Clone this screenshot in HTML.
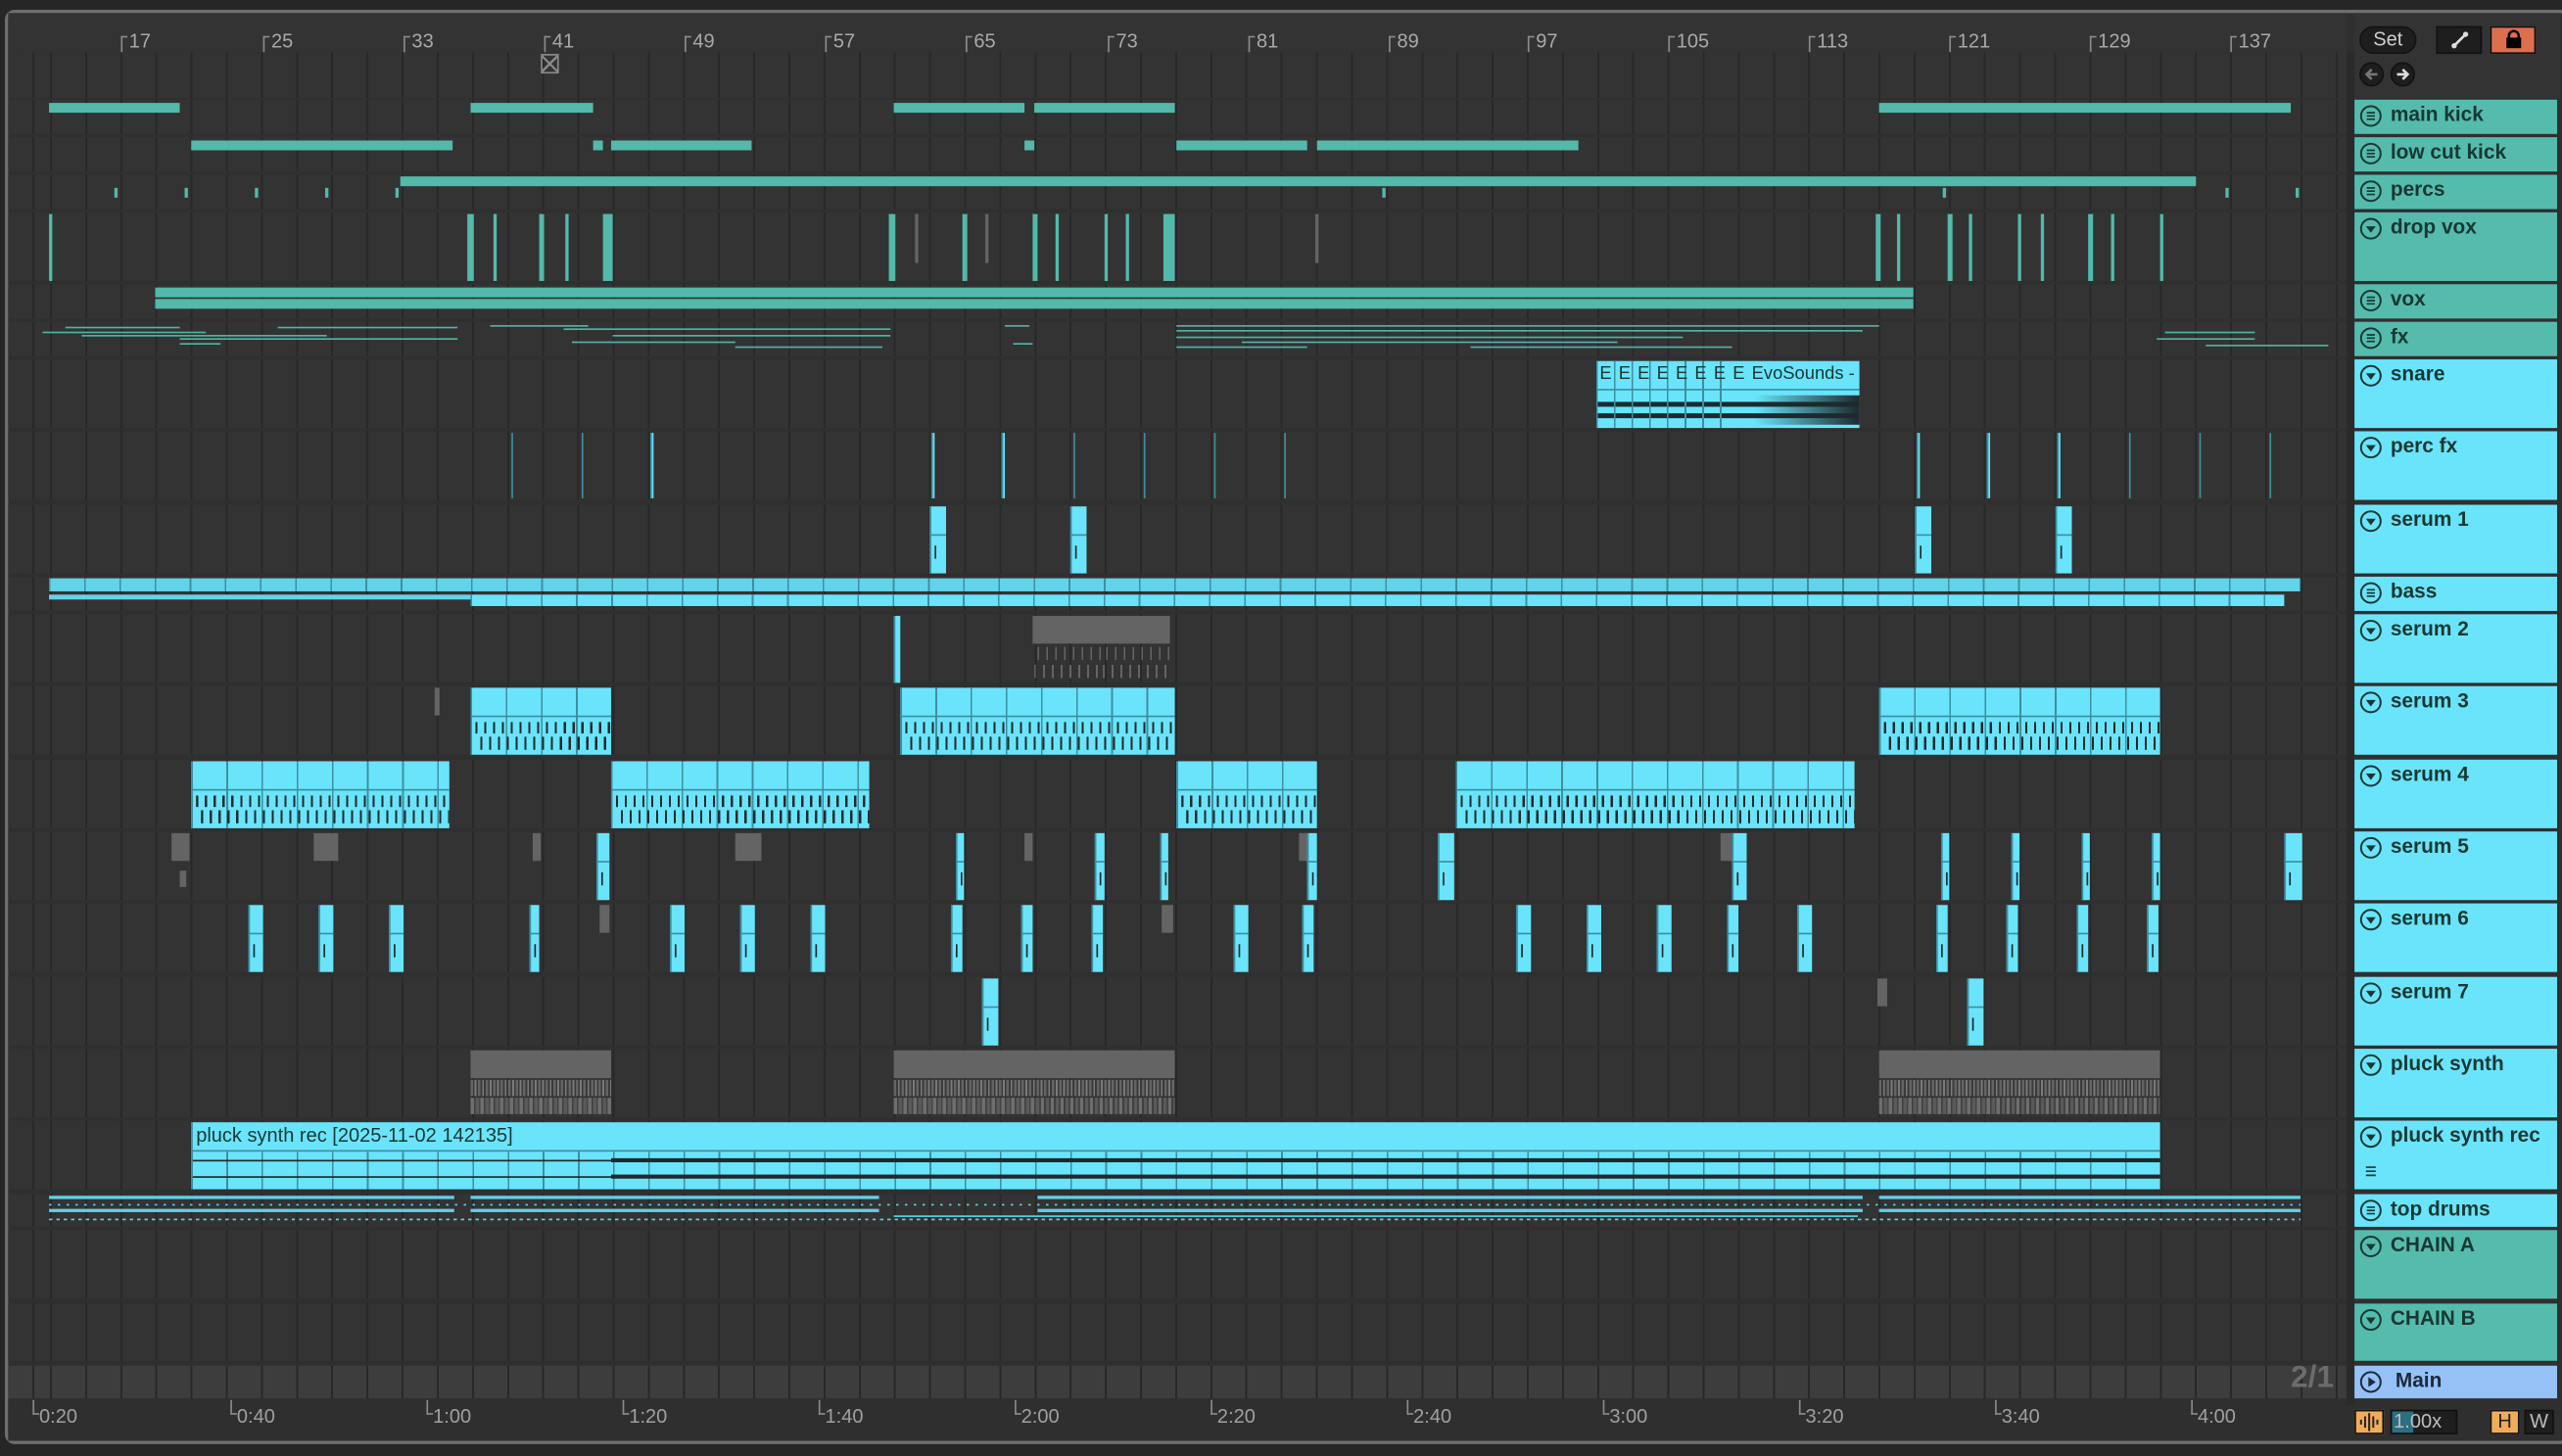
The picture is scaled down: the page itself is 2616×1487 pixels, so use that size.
<!DOCTYPE html>
<html><head><meta charset="utf-8"><style>
*{margin:0;padding:0;box-sizing:border-box}
html,body{width:2616px;height:1486px;overflow:hidden;background:#262626}
#s{position:absolute;left:0;top:0;width:1568px;height:891px;transform:scale(1.66837);transform-origin:0 0;font-family:"Liberation Sans",sans-serif}
.a{position:absolute}
.win{left:3px;top:6px;width:1570px;height:878px;border:2px solid #6e6e6e;border-radius:6px;background:#2f2f2f}
.row{position:absolute;left:5px;width:1431px;background:#333 repeating-linear-gradient(90deg,#282828 0,#282828 1.2px,transparent 1.2px,transparent 21.52px) 25.6px 0}
.h{position:absolute;left:1441px;width:123.5px;font-weight:bold;font-size:12.5px;color:#173833;padding-left:22px;line-height:18px}
.h svg{position:absolute;left:3px;top:3px}
.t{position:absolute;background:#53b9aa}
.c{position:absolute;background:#6ae4fb;box-shadow:inset 1px 0 0 #3d8fa0}
.g{position:absolute;background:#646464}
.ln{position:absolute;height:1px;background:#5fd0e6}
.lt{position:absolute;height:1px;background:#4fb3a5}
.cc{position:absolute;background:
 linear-gradient(#3d8fa0,#3d8fa0) 0 17px/100% 1px no-repeat,
 repeating-linear-gradient(90deg,#1d2a2d 0 1.3px,transparent 1.3px 5.4px) 3px 21px/100% 7px no-repeat,
 repeating-linear-gradient(90deg,#1d2a2d 0 1.3px,transparent 1.3px 5.4px) 5.5px 30px/100% 8px no-repeat,
 repeating-linear-gradient(90deg,#3d8fa0 0 1px,transparent 1px 21.52px) 0 0,
 #6ae4fb}
.sc{position:absolute;background:
 linear-gradient(#3d8fa0,#3d8fa0) 0 17px/100% 1px no-repeat,
 linear-gradient(#1d2a2d,#1d2a2d) 3px 24px/1.3px 8px no-repeat,
 #6ae4fb;box-shadow:inset 1px 0 0 #3d8fa0}
.gg{position:absolute;background:
 linear-gradient(#646464,#646464) 0 0/100% 17px no-repeat,
 repeating-linear-gradient(90deg,#646464 0 1px,transparent 1px 5.4px) 3px 19px/100% 8px no-repeat,
 repeating-linear-gradient(90deg,#646464 0 1px,transparent 1px 5.4px) 1px 30px/100% 8px no-repeat}
.gp{position:absolute;background:
 linear-gradient(#646464,#646464) 0 0/100% 17px no-repeat,
 repeating-linear-gradient(90deg,#646464 0 1.5px,#3a3a3a 1.5px 2.5px,#7a7a7a 2.5px 3.6px,#3a3a3a 3.6px 4.6px) 0 18px/100% 10px no-repeat,
 repeating-linear-gradient(90deg,#6e6e6e 0 2px,#3f3f3f 2px 3px,#5a5a5a 3px 5px,#454545 5px 6px) 0 29px/100% 10px no-repeat}
.rn{position:absolute;top:18px;font-size:12px;color:#a9a9a9}
.rn:before{content:"";position:absolute;left:-5px;top:4px;width:3px;height:9px;border-left:1px solid #8a8a8a;border-top:1px solid #8a8a8a}
.bn{position:absolute;top:860px;font-size:12px;color:#a0a0a0}
.bn:before{content:"";position:absolute;left:-4px;top:-3px;width:3px;height:8px;border-left:1px solid #8a8a8a;border-bottom:1px solid #8a8a8a}
</style></head><body><div id="s">
<div class="a win"></div>
<!-- ruler top -->
<div class="a" style="left:5px;top:8px;width:1431px;height:24px;background:#333"></div>
<div class="rn" style="left:79px">17</div><div class="rn" style="left:166px">25</div><div class="rn" style="left:252px">33</div><div class="rn" style="left:338px">41</div><div class="rn" style="left:424px">49</div><div class="rn" style="left:510px">57</div><div class="rn" style="left:596px">65</div><div class="rn" style="left:683px">73</div><div class="rn" style="left:769px">81</div><div class="rn" style="left:855px">89</div><div class="rn" style="left:940px">97</div><div class="rn" style="left:1026px">105</div><div class="rn" style="left:1112px">113</div><div class="rn" style="left:1198px">121</div><div class="rn" style="left:1284px">129</div><div class="rn" style="left:1370px">137</div>
<div class="row" style="top:32px;height:28px"></div>
<div class="a" style="left:331px;top:33px;width:11px;height:12px;border:1.5px solid #8a8a8a;background:linear-gradient(45deg,transparent 45%,#8a8a8a 45% 55%,transparent 55%),linear-gradient(-45deg,transparent 45%,#8a8a8a 45% 55%,transparent 55%)"></div>
<div class="a" style="left:1436px;top:32px;width:5px;height:828px;background:#2a2a2a"></div>
<div class="a" style="left:1441px;top:8px;width:126px;height:52px;background:#333"></div>
<!-- top buttons -->
<div class="a" style="left:1444px;top:16px;width:35px;height:17px;border-radius:9px;background:#1e1e1e;border:1px solid #111;color:#cfcfcf;font-size:12px;text-align:center;line-height:15px">Set</div>
<div class="a" style="left:1491px;top:16px;width:28px;height:17px;background:#1e1e1e;border:1px solid #111"><svg width="28" height="15"><line x1="10" y1="11" x2="17" y2="4" stroke="#ddd" stroke-width="1.6"/><circle cx="10" cy="11" r="1.6" fill="#ddd"/><circle cx="17" cy="4" r="1.6" fill="#ddd"/></svg></div>
<div class="a" style="left:1524px;top:16px;width:28px;height:17px;background:#dd6f4f;border:1px solid #111"><svg width="28" height="15"><rect x="9" y="6" width="9" height="6.5" fill="#000"/><path d="M10.5 6.5V5a3 3 0 0 1 6 0v1.5" stroke="#000" stroke-width="1.5" fill="none"/></svg></div>
<div class="a" style="left:1444px;top:38px;width:15px;height:15px;border-radius:50%;background:#1e1e1e;border:1px solid #111"><svg width="13" height="13"><path d="M10 6.5H4M6.5 3.5L3.5 6.5L6.5 9.5" stroke="#777" stroke-width="1.6" fill="none"/></svg></div>
<div class="a" style="left:1463px;top:38px;width:15px;height:15px;border-radius:50%;background:#1e1e1e;border:1px solid #111"><svg width="13" height="13"><path d="M3 6.5H9M6.5 3.5L9.5 6.5L6.5 9.5" stroke="#ddd" stroke-width="1.6" fill="none"/></svg></div>

<!-- rows -->
<div class="row" style="top:61px;height:20.5px"></div>
<div class="row" style="top:84px;height:20.5px"></div>
<div class="row" style="top:107px;height:20.5px"></div>
<div class="row" style="top:129.5px;height:42px"></div>
<div class="row" style="top:174px;height:20.5px"></div>
<div class="row" style="top:197px;height:20.5px"></div>
<div class="row" style="top:219.5px;height:42px"></div>
<div class="row" style="top:264px;height:42px"></div>
<div class="row" style="top:308.5px;height:42px"></div>
<div class="row" style="top:353px;height:20.5px"></div>
<div class="row" style="top:375.5px;height:42px"></div>
<div class="row" style="top:420px;height:42px"></div>
<div class="row" style="top:464.5px;height:42px"></div>
<div class="row" style="top:508.5px;height:42px"></div>
<div class="row" style="top:553px;height:42px"></div>
<div class="row" style="top:597.5px;height:42px"></div>
<div class="row" style="top:641.5px;height:42px"></div>
<div class="row" style="top:686px;height:42px"></div>
<div class="row" style="top:730.5px;height:20.5px"></div>
<div class="row" style="top:753px;height:42px"></div>
<div class="row" style="top:797.5px;height:35px"></div>
<div class="row" style="top:835.5px;height:20.5px;background-color:#3d3d3d"></div>
<div class="a" style="left:1402px;top:833px;font-size:19px;font-weight:bold;color:#6c6c6c">2/1</div>
<!-- bottom ruler -->
<div class="a" style="left:5px;top:858px;width:1431px;height:24px;background:#2f2f2f"></div>
<div class="bn" style="left:24px">0:20</div><div class="bn" style="left:145px">0:40</div><div class="bn" style="left:265px">1:00</div><div class="bn" style="left:385px">1:20</div><div class="bn" style="left:505px">1:40</div><div class="bn" style="left:625px">2:00</div><div class="bn" style="left:745px">2:20</div><div class="bn" style="left:865px">2:40</div><div class="bn" style="left:985px">3:00</div><div class="bn" style="left:1105px">3:20</div><div class="bn" style="left:1225px">3:40</div><div class="bn" style="left:1345px">4:00</div>
<!-- bottom buttons -->
<div class="a" style="left:1441px;top:863px;width:18px;height:15px;background:#f1ac5a;border:1px solid #111"><svg width="16" height="13"><path d="M3 5v3M5.5 3v7M8 1v11M10.5 3v7M13 5v3" stroke="#222" stroke-width="1.2"/></svg></div>
<div class="a" style="left:1463px;top:863px;width:41px;height:15px;background:#1e1e1e;border:1px solid #111"></div>
<div class="a" style="left:1464px;top:864px;width:13px;height:13px;background:#2b6f80"></div>
<div class="a" style="left:1465px;top:863px;font-size:12px;color:#bdbdbd;line-height:15px">1.00x</div>
<div class="a" style="left:1524px;top:863px;width:18px;height:15px;background:#f1ac5a;border:1px solid #111;font-size:12px;text-align:center;line-height:13px;color:#222">H</div>
<div class="a" style="left:1545px;top:863px;width:18px;height:15px;background:#1e1e1e;border:1px solid #111;font-size:12px;text-align:center;line-height:13px;color:#bbb">W</div>

<!-- headers -->
<div class="h" style="top:61px;height:20.5px;background:#55bcad"><svg width="14" height="14"><circle cx="7" cy="7" r="6" fill="none" stroke="#173833" stroke-width="1.2"/><path d="M4.5 5h5M4.5 7h5M4.5 9h5" stroke="#173833" stroke-width="1"/></svg>main kick</div>
<div class="h" style="top:84px;height:20.5px;background:#55bcad"><svg width="14" height="14"><circle cx="7" cy="7" r="6" fill="none" stroke="#173833" stroke-width="1.2"/><path d="M4.5 5h5M4.5 7h5M4.5 9h5" stroke="#173833" stroke-width="1"/></svg>low cut kick</div>
<div class="h" style="top:107px;height:20.5px;background:#55bcad"><svg width="14" height="14"><circle cx="7" cy="7" r="6" fill="none" stroke="#173833" stroke-width="1.2"/><path d="M4.5 5h5M4.5 7h5M4.5 9h5" stroke="#173833" stroke-width="1"/></svg>percs</div>
<div class="h" style="top:129.5px;height:42px;background:#55bcad"><svg width="14" height="14"><circle cx="7" cy="7" r="6" fill="none" stroke="#173833" stroke-width="1.2"/><path d="M4 5.5h6L7 9.5z" fill="#173833"/></svg>drop vox</div>
<div class="h" style="top:174px;height:20.5px;background:#55bcad"><svg width="14" height="14"><circle cx="7" cy="7" r="6" fill="none" stroke="#173833" stroke-width="1.2"/><path d="M4.5 5h5M4.5 7h5M4.5 9h5" stroke="#173833" stroke-width="1"/></svg>vox</div>
<div class="h" style="top:197px;height:20.5px;background:#55bcad"><svg width="14" height="14"><circle cx="7" cy="7" r="6" fill="none" stroke="#173833" stroke-width="1.2"/><path d="M4.5 5h5M4.5 7h5M4.5 9h5" stroke="#173833" stroke-width="1"/></svg>fx</div>
<div class="h" style="top:219.5px;height:42px;background:#6ae4fb"><svg width="14" height="14"><circle cx="7" cy="7" r="6" fill="none" stroke="#173833" stroke-width="1.2"/><path d="M4 5.5h6L7 9.5z" fill="#173833"/></svg>snare</div>
<div class="h" style="top:264px;height:42px;background:#6ae4fb"><svg width="14" height="14"><circle cx="7" cy="7" r="6" fill="none" stroke="#173833" stroke-width="1.2"/><path d="M4 5.5h6L7 9.5z" fill="#173833"/></svg>perc fx</div>
<div class="h" style="top:308.5px;height:42px;background:#6ae4fb"><svg width="14" height="14"><circle cx="7" cy="7" r="6" fill="none" stroke="#173833" stroke-width="1.2"/><path d="M4 5.5h6L7 9.5z" fill="#173833"/></svg>serum 1</div>
<div class="h" style="top:353px;height:20.5px;background:#6ae4fb"><svg width="14" height="14"><circle cx="7" cy="7" r="6" fill="none" stroke="#173833" stroke-width="1.2"/><path d="M4.5 5h5M4.5 7h5M4.5 9h5" stroke="#173833" stroke-width="1"/></svg>bass</div>
<div class="h" style="top:375.5px;height:42px;background:#6ae4fb"><svg width="14" height="14"><circle cx="7" cy="7" r="6" fill="none" stroke="#173833" stroke-width="1.2"/><path d="M4 5.5h6L7 9.5z" fill="#173833"/></svg>serum 2</div>
<div class="h" style="top:420px;height:42px;background:#6ae4fb"><svg width="14" height="14"><circle cx="7" cy="7" r="6" fill="none" stroke="#173833" stroke-width="1.2"/><path d="M4 5.5h6L7 9.5z" fill="#173833"/></svg>serum 3</div>
<div class="h" style="top:464.5px;height:42px;background:#6ae4fb"><svg width="14" height="14"><circle cx="7" cy="7" r="6" fill="none" stroke="#173833" stroke-width="1.2"/><path d="M4 5.5h6L7 9.5z" fill="#173833"/></svg>serum 4</div>
<div class="h" style="top:508.5px;height:42px;background:#6ae4fb"><svg width="14" height="14"><circle cx="7" cy="7" r="6" fill="none" stroke="#173833" stroke-width="1.2"/><path d="M4 5.5h6L7 9.5z" fill="#173833"/></svg>serum 5</div>
<div class="h" style="top:553px;height:42px;background:#6ae4fb"><svg width="14" height="14"><circle cx="7" cy="7" r="6" fill="none" stroke="#173833" stroke-width="1.2"/><path d="M4 5.5h6L7 9.5z" fill="#173833"/></svg>serum 6</div>
<div class="h" style="top:597.5px;height:42px;background:#6ae4fb"><svg width="14" height="14"><circle cx="7" cy="7" r="6" fill="none" stroke="#173833" stroke-width="1.2"/><path d="M4 5.5h6L7 9.5z" fill="#173833"/></svg>serum 7</div>
<div class="h" style="top:641.5px;height:42px;background:#6ae4fb"><svg width="14" height="14"><circle cx="7" cy="7" r="6" fill="none" stroke="#173833" stroke-width="1.2"/><path d="M4 5.5h6L7 9.5z" fill="#173833"/></svg>pluck synth</div>
<div class="h" style="top:686px;height:42px;background:#6ae4fb"><svg width="14" height="14"><circle cx="7" cy="7" r="6" fill="none" stroke="#173833" stroke-width="1.2"/><path d="M4 5.5h6L7 9.5z" fill="#173833"/></svg>pluck synth rec<svg width="10" height="10" style="left:6px;top:26px"><path d="M1 2.5h6M1 5h6M1 7.5h6" stroke="#173833" stroke-width="1"/></svg></div>
<div class="h" style="top:730.5px;height:20.5px;background:#6ae4fb"><svg width="14" height="14"><circle cx="7" cy="7" r="6" fill="none" stroke="#173833" stroke-width="1.2"/><path d="M4.5 5h5M4.5 7h5M4.5 9h5" stroke="#173833" stroke-width="1"/></svg>top drums</div>
<div class="h" style="top:753px;height:42px;background:#55bcad"><svg width="14" height="14"><circle cx="7" cy="7" r="6" fill="none" stroke="#173833" stroke-width="1.2"/><path d="M4 5.5h6L7 9.5z" fill="#173833"/></svg>CHAIN A</div>
<div class="h" style="top:797.5px;height:35px;background:#55bcad"><svg width="14" height="14"><circle cx="7" cy="7" r="6" fill="none" stroke="#173833" stroke-width="1.2"/><path d="M4 5.5h6L7 9.5z" fill="#173833"/></svg>CHAIN B</div>
<div class="h" style="top:835.5px;height:20.5px;background:#95c1f6;color:#1c2a3a;padding-left:25px"><svg width="14" height="14"><circle cx="7" cy="7" r="6" fill="none" stroke="#1c2a3a" stroke-width="1.2"/><path d="M5.5 4v6l4.5-3z" fill="#1c2a3a"/></svg>Main</div>

<!-- main kick -->
<div class="t" style="left:30px;top:62.5px;width:80px;height:6px"></div>
<div class="t" style="left:288px;top:62.5px;width:75px;height:6px"></div>
<div class="t" style="left:547px;top:62.5px;width:80px;height:6px"></div>
<div class="t" style="left:633px;top:62.5px;width:86px;height:6px"></div>
<div class="t" style="left:1150px;top:62.5px;width:252px;height:6px"></div>
<!-- low cut -->
<div class="t" style="left:117px;top:85.5px;width:160px;height:6px"></div>
<div class="t" style="left:363px;top:85.5px;width:6px;height:6px"></div>
<div class="t" style="left:374px;top:85.5px;width:86px;height:6px"></div>
<div class="t" style="left:627px;top:85.5px;width:6px;height:6px"></div>
<div class="t" style="left:720px;top:85.5px;width:80px;height:6px"></div>
<div class="t" style="left:806px;top:85.5px;width:160px;height:6px"></div>
<!-- percs -->
<div class="t" style="left:245px;top:108px;width:1099px;height:6px"></div>
<div class="t" style="left:70px;top:115px;width:1.5px;height:6px"></div><div class="t" style="left:113px;top:115px;width:1.5px;height:6px"></div><div class="t" style="left:156px;top:115px;width:1.5px;height:6px"></div><div class="t" style="left:199px;top:115px;width:1.5px;height:6px"></div><div class="t" style="left:242px;top:115px;width:1.5px;height:6px"></div><div class="t" style="left:846px;top:115px;width:1.5px;height:6px"></div><div class="t" style="left:1189px;top:115px;width:1.5px;height:6px"></div><div class="t" style="left:1362px;top:115px;width:1.5px;height:6px"></div><div class="t" style="left:1405px;top:115px;width:1.5px;height:6px"></div>
<!-- drop vox -->
<div class="t" style="left:30px;top:130.5px;width:2px;height:41px"></div>
<div class="t" style="left:286px;top:130.5px;width:4px;height:41px"></div><div class="t" style="left:302px;top:130.5px;width:2px;height:41px"></div><div class="t" style="left:330px;top:130.5px;width:3px;height:41px"></div><div class="t" style="left:346px;top:130.5px;width:2px;height:41px"></div><div class="t" style="left:369px;top:130.5px;width:6px;height:41px"></div>
<div class="t" style="left:544px;top:130.5px;width:4px;height:41px"></div><div class="g" style="left:560px;top:130.5px;width:2px;height:30px"></div><div class="t" style="left:589px;top:130.5px;width:3px;height:41px"></div><div class="g" style="left:603px;top:130.5px;width:2px;height:30px"></div><div class="t" style="left:632px;top:130.5px;width:3px;height:41px"></div><div class="t" style="left:646px;top:130.5px;width:2px;height:41px"></div><div class="t" style="left:676px;top:130.5px;width:2px;height:41px"></div><div class="t" style="left:689px;top:130.5px;width:2px;height:41px"></div><div class="t" style="left:712px;top:130.5px;width:7px;height:41px"></div><div class="g" style="left:805px;top:130.5px;width:2px;height:30px"></div>
<div class="t" style="left:1148px;top:130.5px;width:3px;height:41px"></div><div class="t" style="left:1161px;top:130.5px;width:2px;height:41px"></div><div class="t" style="left:1192px;top:130.5px;width:3px;height:41px"></div><div class="t" style="left:1205px;top:130.5px;width:2px;height:41px"></div><div class="t" style="left:1235px;top:130.5px;width:2px;height:41px"></div><div class="t" style="left:1249px;top:130.5px;width:2px;height:41px"></div><div class="t" style="left:1278px;top:130.5px;width:3px;height:41px"></div><div class="t" style="left:1292px;top:130.5px;width:2px;height:41px"></div><div class="t" style="left:1322px;top:130.5px;width:2px;height:41px"></div>
<!-- vox -->
<div class="t" style="left:95px;top:175.5px;width:1076px;height:6px"></div>
<div class="t" style="left:95px;top:182.5px;width:1076px;height:6px"></div>
<!-- fx lines -->
<div class="lt" style="left:40px;top:200px;width:70px"></div><div class="lt" style="left:26px;top:203px;width:100px"></div><div class="lt" style="left:50px;top:205px;width:150px"></div><div class="lt" style="left:110px;top:207px;width:170px"></div><div class="lt" style="left:110px;top:210px;width:25px"></div><div class="lt" style="left:170px;top:200px;width:110px"></div>
<div class="lt" style="left:300px;top:199px;width:60px"></div><div class="lt" style="left:345px;top:201px;width:200px"></div><div class="lt" style="left:375px;top:205px;width:170px"></div><div class="lt" style="left:350px;top:209px;width:100px"></div><div class="lt" style="left:450px;top:212px;width:90px"></div><div class="lt" style="left:615px;top:199px;width:15px"></div><div class="lt" style="left:620px;top:210px;width:12px"></div>
<div class="lt" style="left:720px;top:199px;width:430px"></div><div class="lt" style="left:720px;top:202px;width:420px"></div><div class="lt" style="left:720px;top:206px;width:310px"></div><div class="lt" style="left:760px;top:209px;width:230px"></div><div class="lt" style="left:720px;top:212px;width:80px"></div><div class="lt" style="left:900px;top:212px;width:160px"></div>
<div class="lt" style="left:1325px;top:203px;width:55px"></div><div class="lt" style="left:1320px;top:207px;width:60px"></div><div class="lt" style="left:1350px;top:211px;width:75px"></div>
<!-- snare -->
<div class="a" style="left:977px;top:220.5px;width:161px;height:41px;background:
 repeating-linear-gradient(90deg,#3d8fa0 0 1px,transparent 1px 10.8px) 0 0/85px 100% no-repeat,
 linear-gradient(#3d8fa0,#3d8fa0) 0 17px/100% 1px no-repeat,
 linear-gradient(#1d2a2d,#1d2a2d) 0 25px/100% 3px no-repeat,
 linear-gradient(#1d2a2d,#1d2a2d) 0 32px/100% 3px no-repeat,
 linear-gradient(90deg,transparent 60%,#1d2a2d) 0 21px/100% 18px no-repeat,
 #6ae4fb;font-size:11px;color:#173833;line-height:17px;white-space:nowrap;overflow:hidden"><span style="letter-spacing:4.3px;padding-left:2px">EEEEEEEE</span>EvoSounds -</div>
<!-- perc fx -->
<div class="a" style="left:313px;top:265px;width:1px;height:40px;background:#3d8fa0"></div><div class="a" style="left:356px;top:265px;width:1px;height:40px;background:#3d8fa0"></div><div class="c" style="left:398px;top:265px;width:2px;height:40px"></div><div class="c" style="left:570px;top:265px;width:2px;height:40px"></div><div class="c" style="left:613px;top:265px;width:2px;height:40px"></div><div class="a" style="left:657px;top:265px;width:1px;height:40px;background:#3d8fa0"></div><div class="a" style="left:700px;top:265px;width:1px;height:40px;background:#3d8fa0"></div><div class="a" style="left:743px;top:265px;width:1px;height:40px;background:#3d8fa0"></div><div class="a" style="left:786px;top:265px;width:1px;height:40px;background:#3d8fa0"></div><div class="c" style="left:1173px;top:265px;width:2px;height:40px"></div><div class="c" style="left:1216px;top:265px;width:2px;height:40px"></div><div class="c" style="left:1259px;top:265px;width:2px;height:40px"></div><div class="a" style="left:1303px;top:265px;width:1px;height:40px;background:#3d8fa0"></div><div class="a" style="left:1346px;top:265px;width:1px;height:40px;background:#3d8fa0"></div><div class="a" style="left:1389px;top:265px;width:1px;height:40px;background:#3d8fa0"></div>
<!-- serum1 -->
<div class="sc" style="left:569px;top:309.5px;width:10px;height:41px"></div><div class="sc" style="left:655px;top:309.5px;width:10px;height:41px"></div><div class="sc" style="left:1172px;top:309.5px;width:10px;height:41px"></div><div class="sc" style="left:1258px;top:309.5px;width:10px;height:41px"></div>
<!-- bass -->
<div class="a" style="left:30px;top:354px;width:1378px;height:8px;background:repeating-linear-gradient(90deg,#3d8fa0 0 1px,transparent 1px 21.52px) 0 0,#62d4ea"></div>
<div class="a" style="left:30px;top:363.5px;width:258px;height:3px;background:#62d4ea"></div>
<div class="a" style="left:288px;top:363.5px;width:1110px;height:7px;background:repeating-linear-gradient(90deg,#3d8fa0 0 1px,transparent 1px 21.52px) 0 0,#6ae4fb"></div>
<!-- serum2 -->
<div class="c" style="left:547px;top:376.5px;width:4px;height:41px"></div>
<div class="gg" style="left:632px;top:376.5px;width:42px;height:41px"></div><div class="gg" style="left:674px;top:376.5px;width:42px;height:41px"></div>
<!-- serum3 -->
<div class="cc" style="left:288px;top:421px;width:86px;height:41px"></div>
<div class="cc" style="left:551px;top:421px;width:168px;height:41px"></div>
<div class="cc" style="left:1150px;top:421px;width:172px;height:41px"></div>
<div class="g" style="left:266px;top:421px;width:3px;height:17px"></div>
<!-- serum4 -->
<div class="cc" style="left:117px;top:465.5px;width:158px;height:41px"></div>
<div class="cc" style="left:374px;top:465.5px;width:158px;height:41px"></div>
<div class="cc" style="left:720px;top:465.5px;width:86px;height:41px"></div>
<div class="cc" style="left:891px;top:465.5px;width:244px;height:41px"></div>
<!-- serum5 -->
<div class="g" style="left:105px;top:509.5px;width:11px;height:17px"></div><div class="g" style="left:110px;top:533px;width:4px;height:10px"></div>
<div class="g" style="left:192px;top:509.5px;width:15px;height:17px"></div>
<div class="g" style="left:326px;top:509.5px;width:5px;height:17px"></div>
<div class="sc" style="left:365px;top:509.5px;width:8px;height:41px"></div>
<div class="g" style="left:450px;top:509.5px;width:16px;height:17px"></div>
<div class="sc" style="left:585px;top:509.5px;width:5px;height:41px"></div>
<div class="g" style="left:627px;top:509.5px;width:5px;height:17px"></div>
<div class="sc" style="left:670px;top:509.5px;width:6px;height:41px"></div>
<div class="sc" style="left:710px;top:509.5px;width:5px;height:41px"></div>
<div class="g" style="left:795px;top:509.5px;width:5px;height:17px"></div><div class="sc" style="left:800px;top:509.5px;width:6px;height:41px"></div>
<div class="sc" style="left:880px;top:509.5px;width:10px;height:41px"></div>
<div class="g" style="left:1053px;top:509.5px;width:7px;height:17px"></div><div class="sc" style="left:1060px;top:509.5px;width:9px;height:41px"></div>
<div class="sc" style="left:1188px;top:509.5px;width:5px;height:41px"></div><div class="sc" style="left:1231px;top:509.5px;width:5px;height:41px"></div><div class="sc" style="left:1274px;top:509.5px;width:5px;height:41px"></div><div class="sc" style="left:1317px;top:509.5px;width:5px;height:41px"></div><div class="sc" style="left:1398px;top:509.5px;width:11px;height:41px"></div>
<!-- serum6 -->
<div class="sc" style="left:152px;top:554px;width:9px;height:41px"></div><div class="sc" style="left:195px;top:554px;width:9px;height:41px"></div><div class="sc" style="left:238px;top:554px;width:9px;height:41px"></div><div class="sc" style="left:324px;top:554px;width:6px;height:41px"></div><div class="g" style="left:367px;top:554px;width:6px;height:17px"></div><div class="sc" style="left:410px;top:554px;width:9px;height:41px"></div><div class="sc" style="left:453px;top:554px;width:9px;height:41px"></div><div class="sc" style="left:496px;top:554px;width:9px;height:41px"></div><div class="sc" style="left:582px;top:554px;width:7px;height:41px"></div><div class="sc" style="left:625px;top:554px;width:7px;height:41px"></div><div class="sc" style="left:668px;top:554px;width:7px;height:41px"></div><div class="g" style="left:711px;top:554px;width:7px;height:17px"></div><div class="sc" style="left:755px;top:554px;width:9px;height:41px"></div><div class="sc" style="left:797px;top:554px;width:7px;height:41px"></div><div class="sc" style="left:928px;top:554px;width:9px;height:41px"></div><div class="sc" style="left:971px;top:554px;width:9px;height:41px"></div><div class="sc" style="left:1014px;top:554px;width:9px;height:41px"></div><div class="sc" style="left:1057px;top:554px;width:7px;height:41px"></div><div class="sc" style="left:1100px;top:554px;width:9px;height:41px"></div><div class="sc" style="left:1185px;top:554px;width:7px;height:41px"></div><div class="sc" style="left:1228px;top:554px;width:7px;height:41px"></div><div class="sc" style="left:1271px;top:554px;width:7px;height:41px"></div><div class="sc" style="left:1314px;top:554px;width:7px;height:41px"></div>
<!-- serum7 -->
<div class="sc" style="left:601px;top:598.5px;width:10px;height:41px"></div>
<div class="g" style="left:1149px;top:598.5px;width:6px;height:17px"></div>
<div class="sc" style="left:1204px;top:598.5px;width:10px;height:41px"></div>
<!-- pluck synth -->
<div class="gp" style="left:288px;top:642.5px;width:86px;height:41px"></div>
<div class="gp" style="left:547px;top:642.5px;width:172px;height:41px"></div>
<div class="gp" style="left:1150px;top:642.5px;width:172px;height:41px"></div>
<!-- pluck rec -->
<div class="a" style="left:117px;top:687px;width:1205px;height:41px;background:
 linear-gradient(#3d8fa0,#3d8fa0) 0 17px/100% 1px no-repeat,
 linear-gradient(#1d2a2d,#1d2a2d) 0 23px/100% 1px no-repeat,
 linear-gradient(#1d2a2d,#1d2a2d) 0 33px/100% 1px no-repeat,
 linear-gradient(#1d2a2d,#1d2a2d) 257px 22px/100% 2.5px no-repeat,
 linear-gradient(#1d2a2d,#1d2a2d) 257px 32px/100% 2.5px no-repeat,
 repeating-linear-gradient(90deg,#3d8fa0 0 1px,transparent 1px 21.52px) 0 18px/100% 23px no-repeat,
 #6ae4fb;box-shadow:inset 1px 0 0 #3d8fa0;font-size:12px;color:#173833;line-height:17px;padding-left:3px">pluck synth rec [2025-11-02 142135]</div>
<!-- top drums -->
<div class="ln" style="left:30px;top:732px;width:248px;height:1.5px"></div><div class="ln" style="left:288px;top:732px;width:250px;height:1.5px"></div><div class="ln" style="left:635px;top:732px;width:505px;height:1.5px"></div><div class="ln" style="left:1150px;top:732px;width:258px;height:1.5px"></div>
<div class="a" style="left:30px;top:737px;width:1378px;height:1px;background:repeating-linear-gradient(90deg,#5fd0e6 0 1.5px,transparent 1.5px 5.4px)"></div>
<div class="ln" style="left:30px;top:740px;width:248px;height:1.5px"></div><div class="ln" style="left:288px;top:740px;width:250px;height:1.5px"></div><div class="ln" style="left:547px;top:744px;width:590px;height:1px"></div><div class="ln" style="left:635px;top:740px;width:505px;height:1.5px"></div><div class="ln" style="left:1150px;top:740px;width:258px;height:1.5px"></div>
<div class="a" style="left:30px;top:746px;width:1378px;height:1px;background:repeating-linear-gradient(90deg,#5fd0e6 0 2px,transparent 2px 4.5px)"></div>
</div></body></html>
